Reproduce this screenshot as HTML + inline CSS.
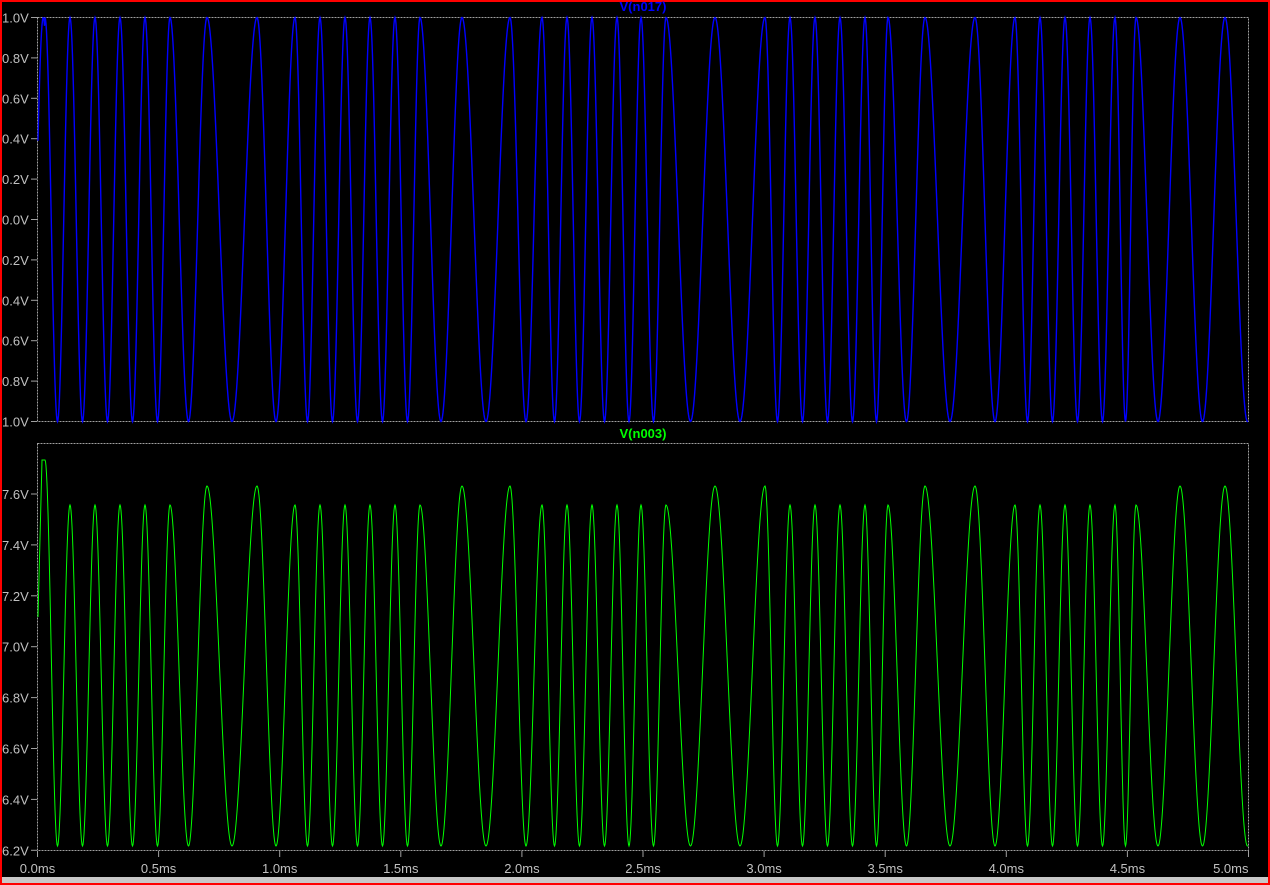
<!DOCTYPE html>
<html><head><meta charset="utf-8"><style>
html,body{margin:0;padding:0;background:#000;width:1270px;height:885px;overflow:hidden}
svg{display:block}
text{font-family:"Liberation Sans",sans-serif;font-size:13px;fill:#c0c0c0}
</style></head><body>
<svg id="s" width="1270" height="885" xmlns="http://www.w3.org/2000/svg">
<rect x="0" y="0" width="1270" height="885" fill="#000"/>
<rect x="0" y="877" width="1270" height="6" fill="#c8c8c8"/>
<rect x="0" y="0" width="1270" height="885" fill="none" stroke="#ff0000" stroke-width="4"/>
<rect x="37.5" y="17.5" width="1211" height="404" fill="none" stroke="#a0a0a0" stroke-dasharray="2,1"/>
<rect x="37.5" y="443.5" width="1211" height="407" fill="none" stroke="#a0a0a0" stroke-dasharray="2,1"/>
<text x="643" y="11" text-anchor="middle" style="fill:#0000ff;font-weight:bold">V(n017)</text>
<text x="643" y="438" text-anchor="middle" style="fill:#00ff00;font-weight:bold">V(n003)</text>
<g id="lab"></g>
<path id="wtop" fill="none" stroke="#0000ff" stroke-width="1.4"/>
<path id="wbot" fill="none" stroke="#00ff00" stroke-width="1"/>
</svg>
<script>
(function(){
var NS="http://www.w3.org/2000/svg",g=document.getElementById('lab');
function t(x,y,s,a){var e=document.createElementNS(NS,'text');e.setAttribute('x',x);e.setAttribute('y',y);if(a)e.setAttribute('text-anchor',a);e.textContent=s;g.appendChild(e);}
function l(x1,y1,x2,y2){var e=document.createElementNS(NS,'line');e.setAttribute('x1',x1);e.setAttribute('y1',y1);e.setAttribute('x2',x2);e.setAttribute('y2',y2);e.setAttribute('stroke','#a0a0a0');g.appendChild(e);}
var tl=["1.0V","0.8V","0.6V","0.4V","0.2V","0.0V","0.2V","0.4V","0.6V","0.8V","1.0V"];
for(var i=0;i<11;i++){var y=17.5+i*40.4;t(2,y+5,tl[i]);l(31,y,37,y);}
var bl=["7.6V","7.4V","7.2V","7.0V","6.8V","6.6V","6.4V","6.2V"];
for(var i=0;i<8;i++){var y=494+i*50.9;t(2,y+5,bl[i]);l(31,y,37,y);}
for(var i=0;i<11;i++){var x=37.5+i*121.1;l(x,851,x,857);t(x,873,(i*0.5).toFixed(1)+"ms",i==10?"end":"middle");}
var pk=[38,45,70,95,120,145,170,207,257,295,320,345,370,395,420,462,510,542,567,592,617,641,666,715,765,790,815,840,865,888,925,975,1015,1040,1065,1090,1115,1136,1180,1225,1270];
var tall={207:1,257:1,462:1,510:1,715:1,765:1,925:1,975:1,1180:1,1225:1,1270:1};
function h(p){return p==45?460:(tall[p]?486:505);}
var tp="",bp="";
for(var x=38;x<=1248;x+=0.5){
 var k=0;while(pk[k+1]<=x)k++;
 var p0=pk[k],p1=pk[k+1],ph=(x-p0)/(p1-p0);
 var v=Math.cos(2*Math.PI*ph);
 if(k==0)v=Math.sin(Math.PI/2*(x-38)/7+0.4);
 var ty=219.5-v*202;
 tp+=(tp?"L":"M")+x+" "+ty.toFixed(1);
 var w=0.5+0.5*Math.cos(2*Math.PI*ph);
 var by=846-(846-h(ph<0.5?p0:p1))*w;
 if(k==0)by=Math.max(460,617-((x-38)/4)*(617-460));
 bp+=(bp?"L":"M")+x+" "+by.toFixed(1);
}
document.getElementById('wtop').setAttribute('d',tp);
document.getElementById('wbot').setAttribute('d',bp);
})();
</script>
</body></html>
